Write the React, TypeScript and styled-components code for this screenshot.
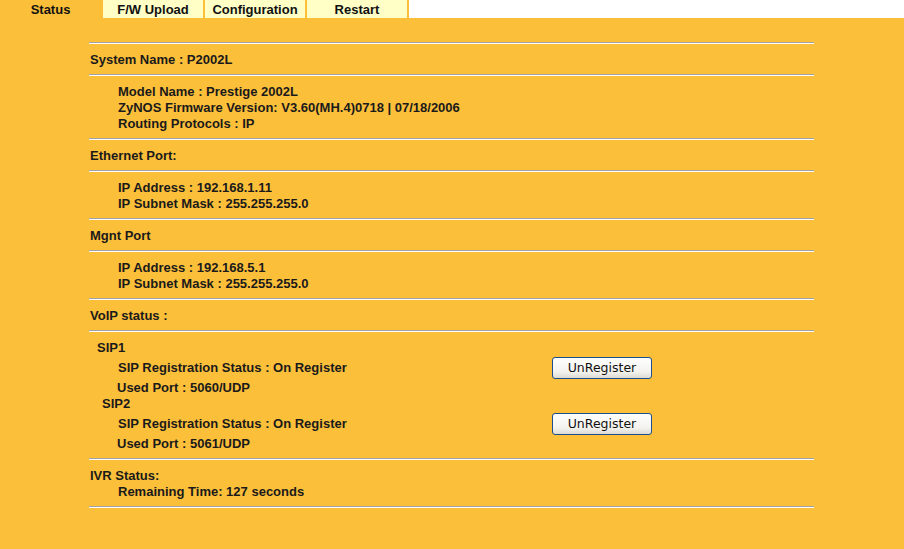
import React from 'react'
import styled, { createGlobalStyle } from 'styled-components'

const GlobalStyle = createGlobalStyle`
  html, body {
    margin: 0;
    padding: 0;
    background: #fcbf3a;
  }
  body {
    font-family: "Liberation Sans", Arial, sans-serif;
    color: #1a1a1a;
  }
`

const Page = styled.div`
  width: 904px;
  min-height: 549px;
  background: #fcbf3a;
`

const TabBar = styled.div`
  display: flex;
  height: 18px;
  gap: 2px;
`
const CurrentTab = styled.div`
  width: 101px;
  font-size: 13px;
  font-weight: bold;
  line-height: 19px;
  text-align: center;
  color: #111;
`
const Tab = styled.a`
  width: 100px;
  background: #ffffc6;
  font-size: 13px;
  font-weight: bold;
  line-height: 19px;
  text-align: center;
  color: #111;
  text-decoration: none;
`
const TabFill = styled.div`
  flex: 1;
  background: #fff;
`

const Content = styled.div`
  width: 725px;
  margin: 24px 0 0 89px;
`
const Rule = styled.div`
  border-top: 1px solid #a3a3a3;
  border-bottom: 1px solid #fff;
`
const Section = styled.div`
  padding: 8px 0 6px;
  font-size: 13px;
  font-weight: bold;
  line-height: 16px;
`
const Heading = styled.div`
  padding-left: 1px;
`
const Detail = styled.div<{ $indent?: number }>`
  padding-left: ${(p) => p.$indent ?? 29}px;
`
const SipTitle = styled.div<{ $indent: number }>`
  padding-left: ${(p) => p.$indent}px;
`
const SipRow = styled.div`
  display: flex;
  align-items: center;
  height: 24px;
  padding-left: 29px;
`
const SipLabel = styled.span`
  width: 434px;
`
const Button = styled.button`
  width: 100px;
  height: 22px;
  margin-top: -1px;
  padding: 0;
  border: 1px solid #1c4f8c;
  border-radius: 3px;
  background: linear-gradient(#ffffff, #f3f2ee 70%, #dcdad3);
  font-family: Tahoma, "DejaVu Sans", sans-serif;
  font-size: 12.5px;
  color: #111;
`

const sips = [
  { name: 'SIP1', indent: 8, port: '5060/UDP' },
  { name: 'SIP2', indent: 13, port: '5061/UDP' },
]

export default function App() {
  return (
    <Page>
      <GlobalStyle />
      <TabBar>
        <CurrentTab>Status</CurrentTab>
        <Tab>F/W Upload</Tab>
        <Tab>Configuration</Tab>
        <Tab>Restart</Tab>
        <TabFill />
      </TabBar>
      <Content>
        <Rule />
        <Section>
          <Heading>System Name : P2002L</Heading>
        </Section>
        <Rule />
        <Section>
          <Detail>Model Name : Prestige 2002L</Detail>
          <Detail>ZyNOS Firmware Version: V3.60(MH.4)0718 | 07/18/2006</Detail>
          <Detail>Routing Protocols : IP</Detail>
        </Section>
        <Rule />
        <Section>
          <Heading>Ethernet Port:</Heading>
        </Section>
        <Rule />
        <Section>
          <Detail>IP Address : 192.168.1.11</Detail>
          <Detail>IP Subnet Mask : 255.255.255.0</Detail>
        </Section>
        <Rule />
        <Section>
          <Heading>Mgnt Port</Heading>
        </Section>
        <Rule />
        <Section>
          <Detail>IP Address : 192.168.5.1</Detail>
          <Detail>IP Subnet Mask : 255.255.255.0</Detail>
        </Section>
        <Rule />
        <Section>
          <Heading>VoIP status :</Heading>
        </Section>
        <Rule />
        <Section>
          {sips.map((s) => (
            <React.Fragment key={s.name}>
              <SipTitle $indent={s.indent}>{s.name}</SipTitle>
              <SipRow>
                <SipLabel>SIP Registration Status : On Register</SipLabel>
                <Button>UnRegister</Button>
              </SipRow>
              <Detail $indent={28}>Used Port : {s.port}</Detail>
            </React.Fragment>
          ))}
        </Section>
        <Rule />
        <Section>
          <Heading>IVR Status:</Heading>
          <Detail>Remaining Time: 127 seconds</Detail>
        </Section>
        <Rule />
      </Content>
    </Page>
  )
}
